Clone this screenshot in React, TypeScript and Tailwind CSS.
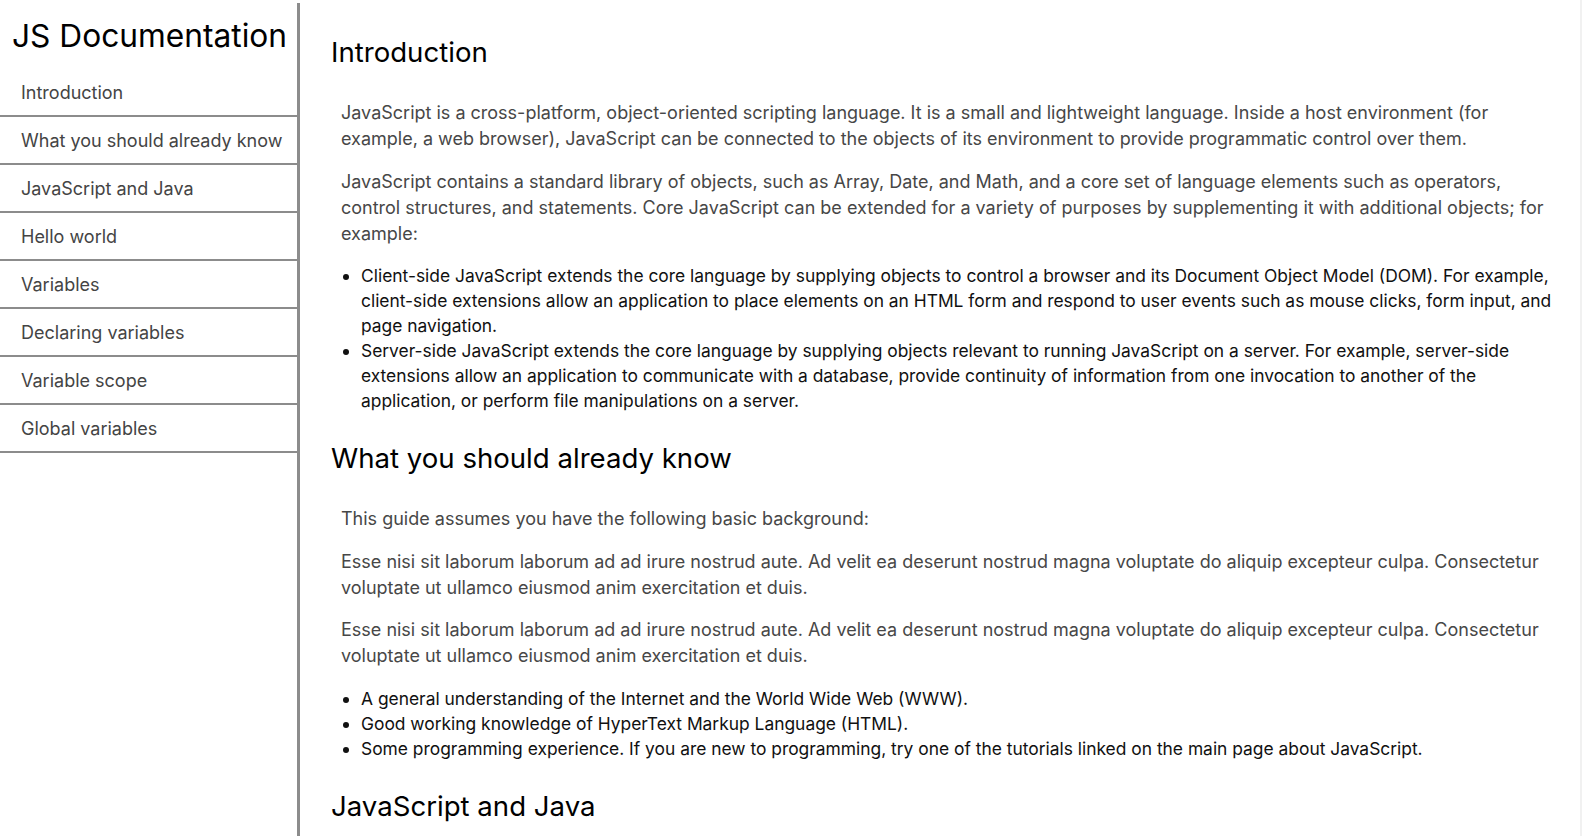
import React from "react";

const navItems = [
  "Introduction",
  "What you should already know",
  "JavaScript and Java",
  "Hello world",
  "Variables",
  "Declaring variables",
  "Variable scope",
  "Global variables",
];

function Sidebar(): JSX.Element {
  return (
    <nav className="mt-[3px] w-[300px] shrink-0 border-r-[3px] border-r-[#8c8c8c]">
      <header className="flex h-[66px] items-center pl-[12px] text-[31.7px] text-black">JS Documentation</header>
      <ul>
        {navItems.map((item) => (
          <li key={item} className="flex h-[48px] items-center border-b-2 border-b-[#8c8c8c] pl-[21px] text-[18px] text-[#444]">
            {item}
          </li>
        ))}
      </ul>
    </nav>
  );
}

function Section({ title, children }: { title: string; children?: React.ReactNode }): JSX.Element {
  return (
    <section>
      <h2 className="py-[13px] text-[27.6px] leading-[34px] text-black">{title}</h2>
      <div className="px-[10px] pt-[18px]">{children}</div>
    </section>
  );
}

function P({ children }: { children: React.ReactNode }): JSX.Element {
  return <p className="mb-[16.6px] text-[18px] leading-[26px] text-[#474747]">{children}</p>;
}

function List({ items }: { items: string[] }): JSX.Element {
  return (
    <ul className="mb-[15px] list-disc pl-[20px] text-[17.4px] leading-[25px] text-[#111]">
      {items.map((item) => (
        <li key={item}>{item}</li>
      ))}
    </ul>
  );
}

export default function App(): JSX.Element {
  return (
    <div className="flex h-[836px] overflow-hidden bg-white font-['Inter',sans-serif]">
      <Sidebar />
      <main className="flex-1 overflow-hidden border-r-2 border-r-[#f1f1f1] pl-[31px] pr-[17px] pt-[22px]">
        <Section title="Introduction">
          <P>
            JavaScript is a cross-platform, object-oriented scripting language. It is a small and lightweight
            language. Inside a host environment (for example, a web browser), JavaScript can be connected to the
            objects of its environment to provide programmatic control over them.
          </P>
          <P>
            JavaScript contains a standard library of objects, such as Array, Date, and Math, and a core set of
            language elements such as operators, control structures, and statements. Core JavaScript can be extended
            for a variety of purposes by supplementing it with additional objects; for example:
          </P>
          <List
            items={[
              "Client-side JavaScript extends the core language by supplying objects to control a browser and its Document Object Model (DOM). For example, client-side extensions allow an application to place elements on an HTML form and respond to user events such as mouse clicks, form input, and page navigation.",
              "Server-side JavaScript extends the core language by supplying objects relevant to running JavaScript on a server. For example, server-side extensions allow an application to communicate with a database, provide continuity of information from one invocation to another of the application, or perform file manipulations on a server.",
            ]}
          />
        </Section>
        <Section title="What you should already know">
          <P>This guide assumes you have the following basic background:</P>
          <P>
            Esse nisi sit laborum laborum ad ad irure nostrud aute. Ad velit ea deserunt nostrud magna voluptate do
            aliquip excepteur culpa. Consectetur voluptate ut ullamco eiusmod anim exercitation et duis.
          </P>
          <P>
            Esse nisi sit laborum laborum ad ad irure nostrud aute. Ad velit ea deserunt nostrud magna voluptate do
            aliquip excepteur culpa. Consectetur voluptate ut ullamco eiusmod anim exercitation et duis.
          </P>
          <List
            items={[
              "A general understanding of the Internet and the World Wide Web (WWW).",
              "Good working knowledge of HyperText Markup Language (HTML).",
              "Some programming experience. If you are new to programming, try one of the tutorials linked on the main page about JavaScript.",
            ]}
          />
        </Section>
        <Section title="JavaScript and Java" />
      </main>
    </div>
  );
}
